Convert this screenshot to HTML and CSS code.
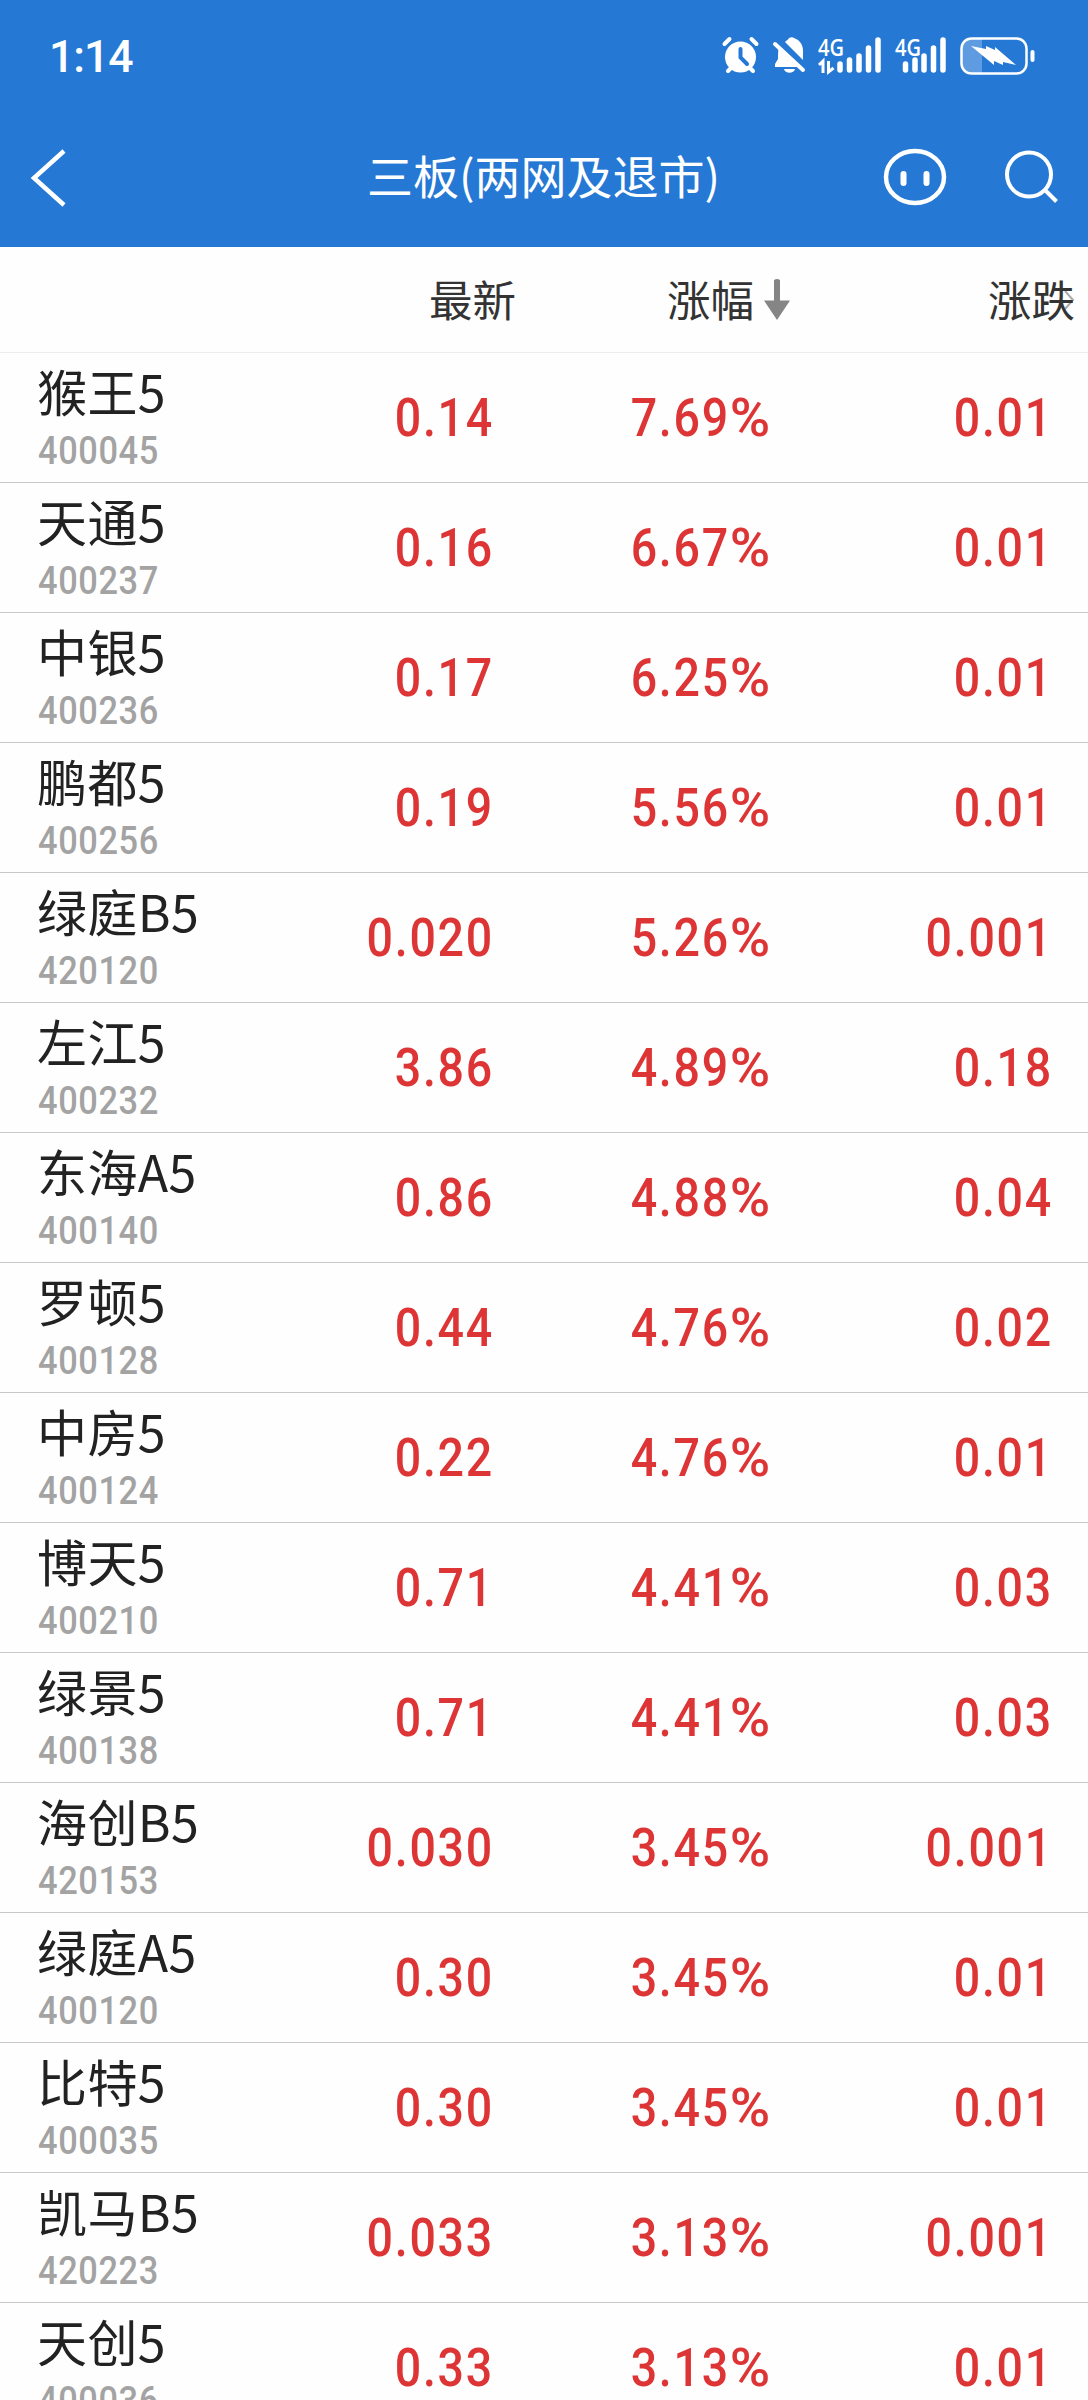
FILE: index.html
```html
<!DOCTYPE html>
<html lang="zh-CN">
<head>
    <meta charset="UTF-8">
    <meta name="viewport" content="width=device-width, initial-scale=1.0">
    <title>三板(两网及退市)</title>
    <link rel="stylesheet" href="styles.css">
</head>
<body>
<header class="top">
    <div class="status">
        <span class="time">1:14</span>
        <svg class="status-icons" width="320" height="48" viewBox="0 0 320 48">
            <!-- alarm -->
            <circle cx="19.5" cy="25" r="15.5" fill="#fff"/>
            <path d="M3.500 12l5-5M35.500 12l-5-5M7 39l4-4M32 39l-4-4" stroke="#fff" stroke-width="4" stroke-linecap="round"/>
            <path d="M19.5 17v8.500l6.500 6.500" fill="none" stroke="#2578d4" stroke-width="4" stroke-linecap="round"/>
            <!-- muted bell -->
            <path d="M54 35h26L58 15c-1 3-1 7-1 12l-3 5v3zM64 10c2-2 3-2 4-4 2-1 4-1 5 0 6 2 9 7 9 13v9zM63 37h11c-1 5-10 5-11 0z" fill="#fff"/>
            <path d="M54 12l28 26" stroke="#fff" stroke-width="4" stroke-linecap="round"/>
            <!-- signal 1 -->
            <text x="97" y="24" class="net" textLength="26" lengthAdjust="spacingAndGlyphs">4G</text>
            <path d="M98 33l4-4v12M107.500 29v11l5-4" fill="none" stroke="#fff" stroke-width="3"/>
            <path d="M119 32v6M128.500 28v10M138 24v14M147.500 16v22M157 8v30" stroke="#fff" stroke-width="5.500" stroke-linecap="round"/>
            <!-- signal 2 -->
            <text x="174" y="24" class="net" textLength="26" lengthAdjust="spacingAndGlyphs">4G</text>
            <path d="M184.500 32v6M194 28v10M203 24v14M212.500 16v22M222 8v30" stroke="#fff" stroke-width="5.500" stroke-linecap="round"/>
            <!-- battery -->
            <path d="M248 7h13v34h-13q-8-1-8-8V15q0-7 8-8z" fill="#5e9be0"/>
            <rect x="240.500" y="6.500" width="65" height="35" rx="10" fill="none" stroke="#fff" stroke-width="2.500"/>
            <path d="M250 14l15 3v-3l9 4v-3l21 18-13-3v3l-9-4v4z" fill="#fff"/>
            <path d="M311.500 20v8" stroke="#fff" stroke-width="4" stroke-linecap="round"/>
        </svg>
    </div>
    <nav class="nav">
        <svg width="60" height="70" viewBox="0 0 60 70"><path d="M40 8L10 35l30 27" fill="none" stroke="#fff" stroke-width="4.500"/></svg>
        <h1>三板(两网及退市)</h1>
        <div class="actions">
            <svg width="66" height="60" viewBox="0 0 66 60">
                <ellipse cx="33" cy="29" rx="29" ry="26" fill="none" stroke="#fff" stroke-width="4.500"/>
                <path d="M21.500 26v9M44.500 26v9" stroke="#fff" stroke-width="6" stroke-linecap="round"/>
            </svg>
            <svg width="60" height="60" viewBox="0 0 60 60">
                <circle cx="27" cy="26.500" r="22" fill="none" stroke="#fff" stroke-width="4"/>
                <path d="M43 42l11.500 11.500" stroke="#fff" stroke-width="4"/>
            </svg>
        </div>
    </nav>
</header>

<div class="thead">
    <svg class="more" width="12" height="22" viewBox="0 0 12 22"><path d="M2 2l8 9-8 9" fill="none" stroke="#aaa" stroke-width="2"/></svg>
    <span class="latest">最新</span>
    <span class="percent">涨幅<svg class="sort" width="26" height="42" viewBox="0 0 26 42"><path d="M10 2q3-2 6 0v20.500h10L13 42 0 22.500h10z" fill="#858585"/></svg></span>
    <span class="change">涨跌</span>
</div>

<main class="list">
    <div class="row"><div class="stock"><b>猴王5</b><i>400045</i></div><span>0.14</span><span>7.69<em>%</em></span><span>0.01</span></div>
    <div class="row"><div class="stock"><b>天通5</b><i>400237</i></div><span>0.16</span><span>6.67<em>%</em></span><span>0.01</span></div>
    <div class="row"><div class="stock"><b>中银5</b><i>400236</i></div><span>0.17</span><span>6.25<em>%</em></span><span>0.01</span></div>
    <div class="row"><div class="stock"><b>鹏都5</b><i>400256</i></div><span>0.19</span><span>5.56<em>%</em></span><span>0.01</span></div>
    <div class="row"><div class="stock"><b>绿庭B5</b><i>420120</i></div><span>0.020</span><span>5.26<em>%</em></span><span>0.001</span></div>
    <div class="row"><div class="stock"><b>左江5</b><i>400232</i></div><span>3.86</span><span>4.89<em>%</em></span><span>0.18</span></div>
    <div class="row"><div class="stock"><b>东海A5</b><i>400140</i></div><span>0.86</span><span>4.88<em>%</em></span><span>0.04</span></div>
    <div class="row"><div class="stock"><b>罗顿5</b><i>400128</i></div><span>0.44</span><span>4.76<em>%</em></span><span>0.02</span></div>
    <div class="row"><div class="stock"><b>中房5</b><i>400124</i></div><span>0.22</span><span>4.76<em>%</em></span><span>0.01</span></div>
    <div class="row"><div class="stock"><b>博天5</b><i>400210</i></div><span>0.71</span><span>4.41<em>%</em></span><span>0.03</span></div>
    <div class="row"><div class="stock"><b>绿景5</b><i>400138</i></div><span>0.71</span><span>4.41<em>%</em></span><span>0.03</span></div>
    <div class="row"><div class="stock"><b>海创B5</b><i>420153</i></div><span>0.030</span><span>3.45<em>%</em></span><span>0.001</span></div>
    <div class="row"><div class="stock"><b>绿庭A5</b><i>400120</i></div><span>0.30</span><span>3.45<em>%</em></span><span>0.01</span></div>
    <div class="row"><div class="stock"><b>比特5</b><i>400035</i></div><span>0.30</span><span>3.45<em>%</em></span><span>0.01</span></div>
    <div class="row"><div class="stock"><b>凯马B5</b><i>420223</i></div><span>0.033</span><span>3.13<em>%</em></span><span>0.001</span></div>
    <div class="row"><div class="stock"><b>天创5</b><i>400036</i></div><span>0.33</span><span>3.13<em>%</em></span><span>0.01</span></div>
</main>
</body>
</html>
```
FILE: styles.css
```css
* { box-sizing: border-box; }
body { margin: 0; height: 2400px; overflow: hidden; background: #fefefe; font-family: "Noto Sans CJK SC", sans-serif; }
svg { display: block; flex: none; overflow: visible; }

.top { height: 247px; background: #2578d4; color: #fff; }
.status { height: 112px; padding: 2px 47px 0 49px; display: flex; justify-content: space-between; align-items: center; }
.time { font: 500 44.500px/50px Roboto, sans-serif; letter-spacing: -1px; }
.status-icons { margin-top: -2px; }
.net { font: 600 24px "Open Sans", sans-serif; fill: #fff; }
.nav { height: 132px; padding: 0 24px; display: grid; grid-template-columns: 180px 1fr 180px; align-items: center; }
.nav h1 { margin: 0 0 8px -1px; font-size: 46px; font-weight: 400; line-height: 60px; text-align: center; white-space: nowrap; }
.actions { display: flex; justify-content: flex-end; gap: 54px; margin-right: 2px; }

.thead, .row { display: grid; grid-template-columns: 190px 265px 278px 281px; padding-left: 38px; align-items: center; }
.thead { position: relative; height: 106px; padding: 0 0 1px 61px; font-size: 43.500px; line-height: 60px; color: #333; border-bottom: 1px solid #ececec; }
.thead span { position: relative; display: flex; justify-content: flex-end; align-items: center; }
.latest { grid-column: 2; }
.thead .percent { padding-right: 4px; }
.sort { margin-left: 10px; }
.more { position: absolute; right: 13px; top: 42px; }

.row { height: 130px; border-bottom: 1px solid #c8c8c8; }
.stock b, .stock i { display: block; font-weight: 400; font-style: normal; white-space: nowrap; }
.stock b { margin: -6px 0 6px -1px; font-size: 50px; line-height: 66px; letter-spacing: 0.400px; color: #222; }
.stock i { font: 500 39.500px/44px Roboto, sans-serif; letter-spacing: 0.700px; color: #a3a3a3; transform: scaleX(.87); transform-origin: left; }
.row > span { margin-right: -1px; font: 500 53.500px/60px Roboto, sans-serif; letter-spacing: 2px; color: #dd3535; text-align: right; transform: scaleX(.87); transform-origin: right; }
.row em { display: inline-block; margin-left: 7px; font-style: normal; transform: scaleX(1.18); transform-origin: right; }
```
